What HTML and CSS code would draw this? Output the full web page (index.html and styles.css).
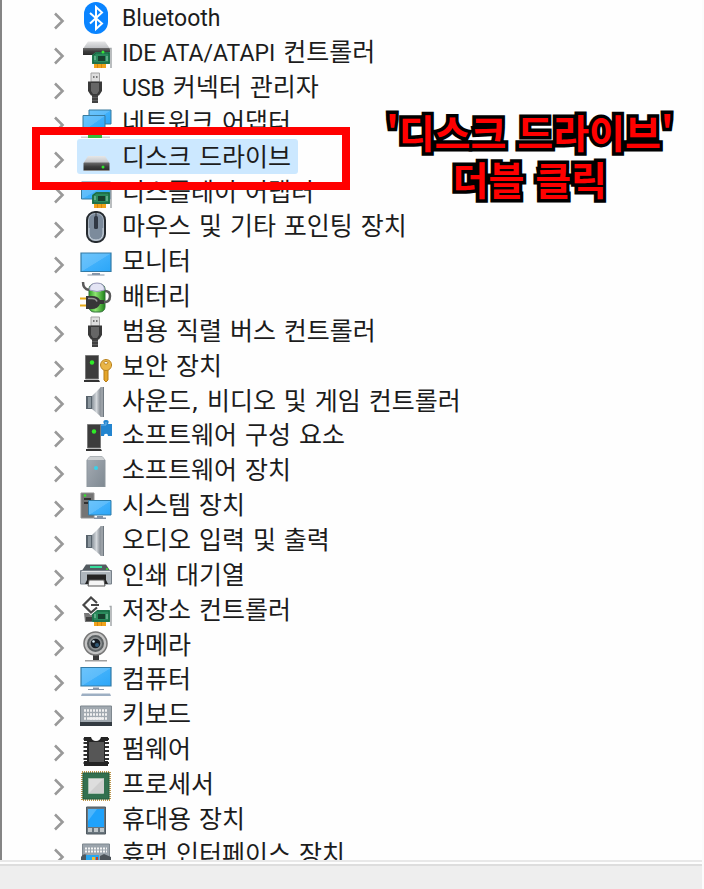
FILE: index.html
```html
<!DOCTYPE html>
<html lang="ko">
<head>
<meta charset="utf-8">
<meta name="viewport" content="width=device-width, initial-scale=1">
<title>장치 관리자</title>
<link rel="stylesheet" href="styles.css">
</head>
<body>
<svg class="sprite" aria-hidden="true">
  <defs>
    <linearGradient id="screen" x1="0" y1="0" x2="1" y2="1"><stop offset="0" stop-color="#6cc4fb"/><stop offset=".5" stop-color="#5cbcfb"/><stop offset=".52" stop-color="#3fb0fb"/><stop offset="1" stop-color="#2ba6f8"/></linearGradient>
    <linearGradient id="silver" x1="0" y1="0" x2="0" y2="1"><stop offset="0" stop-color="#e6e7e8"/><stop offset="1" stop-color="#bfc1c4"/></linearGradient>
    <linearGradient id="dark" x1="0" y1="0" x2="0" y2="1"><stop offset="0" stop-color="#6c6c6c"/><stop offset=".5" stop-color="#3d3d3d"/><stop offset="1" stop-color="#2a2a2a"/></linearGradient>
    <linearGradient id="steel" x1="0" y1="0" x2="1" y2="0"><stop offset="0" stop-color="#8b949c"/><stop offset=".5" stop-color="#d4d8dc"/><stop offset="1" stop-color="#7b828a"/></linearGradient>
    <linearGradient id="slate" x1="0" y1="0" x2="1" y2="1"><stop offset="0" stop-color="#a5acb4"/><stop offset="1" stop-color="#7f8992"/></linearGradient>
    <linearGradient id="cell" x1="0" y1="0" x2="1" y2="0"><stop offset="0" stop-color="#2c9d25"/><stop offset=".4" stop-color="#8fe572"/><stop offset="1" stop-color="#1d8218"/></linearGradient>
    <symbol id="chevron" viewBox="0 0 12 18"><path d="M2 1.500L9.500 9L2 16.500" fill="none" stroke="#999" stroke-width="2.600"/></symbol>
    <symbol id="board" viewBox="0 0 32 32"><path d="M14 26h12v5H14z" fill="#f0a31b"/><path d="M17.500 27v4M21.500 27v4" stroke="#c87a08" stroke-width=".7"/><path d="M12 18l4-3h14v12H12z" fill="#2a8a5c"/><path d="M13 18.500l3.500-2.500H29v10H13z" fill="none" stroke="#155c3c"/><path d="M18 19h7v5h-7z" fill="#173f2d"/><path d="M15 19v4M27 19v5" stroke="#92cdb0"/><path d="M29.500 11.500h1.500V31" fill="none" stroke="#a4a8aa" stroke-width="1.500"/></symbol>
    <symbol id="bluetooth" viewBox="0 0 32 32"><rect x="4" width="24" height="32" rx="12" fill="#0a84ff"/><path d="M10 11l12 10.500-6 5.500V5l6 5.500L10 21.500" fill="none" stroke="#fff" stroke-width="2"/></symbol>
    <symbol id="ide" viewBox="0 0 32 32"><path d="M8 4.500h17l4.500 6.500h-26z" fill="url(#silver)"/><path d="M3 11h27v7H3z" fill="url(#dark)"/><use href="#board"/><circle cx="23" cy="15" r="1.500" fill="#39e637"/></symbol>
    <symbol id="usb" viewBox="0 0 32 32"><path d="M11 1h8.500v9H11z" fill="#dedede" stroke="#a2a2a2"/><path d="M13 4h1.500v2H13zM16 4h1.500v2H16z" fill="#777"/><path d="M8 9.500h14V19l-3 4.500h-8L8 19z" fill="#393939"/><path d="M11 11h8v8l-2 3h-4l-2-3z" fill="#666"/><path d="M12 23h6v8h-6z" fill="#414141"/><path d="M12 25.500h6M12 28.500h6" stroke="#6d6d6d" stroke-width=".7"/></symbol>
    <symbol id="network" viewBox="0 0 32 32"><path d="M9 3h22v14H9z" fill="url(#screen)" stroke="#397b9e"/><path d="M3 8.500h22V24H3z" fill="url(#screen)" stroke="#397b9e"/><path d="M1 29.500h29V31H1z" fill="#cfcfcf"/><path d="M8 28h14v3H8z" fill="#36bb3a"/></symbol>
    <symbol id="disk" viewBox="0 0 32 32"><path d="M8 14h17l4.500 7h-26z" fill="url(#silver)"/><rect x="3.500" y="20.500" width="26" height="8.500" rx="1" fill="url(#dark)"/><path d="M4 28.500h25" stroke="#8b8b8b"/><circle cx="23" cy="25" r="1.500" fill="#30e82d"/></symbol>
    <symbol id="display" viewBox="0 0 32 32"><path d="M1.500 5h29v17h-29z" fill="url(#screen)" stroke="#397b9e"/><use href="#board"/></symbol>
    <symbol id="mouse" viewBox="0 0 32 32"><rect x="7" y="1" width="18" height="30" rx="8" fill="#a5b1be" stroke="#252a2f" stroke-width="2"/><rect x="9" y="3" width="14" height="26" rx="6" fill="#7c8b9c"/><path d="M16 2v5" stroke="#333"/><rect x="14" y="5" width="4" height="13" rx="1.500" fill="#303844"/><path d="M9 17v6q1 6 7 6t7-6v-6" fill="none" stroke="#c6d0db"/></symbol>
    <symbol id="monitor" viewBox="0 0 32 32"><path d="M1 7h30v18.500H1z" fill="url(#screen)" stroke="#347ba5" stroke-width="1.200"/><path d="M12 27h8v1.500h4.500v1h-17v-1H12z" fill="#8796a8"/></symbol>
    <symbol id="battery" viewBox="0 0 32 32"><rect x="9" y="3" width="16" height="28" rx="5" fill="url(#cell)" stroke="#33723a"/><path d="M9.500 9q0-7 7.500-7t7.500 7q-7.500 3-15 0z" fill="#e3e4f4" stroke="#9a98bd"/><path d="M3 1q0 7 6 8M23 21q7 1 7-6 0-5-5-5" fill="none" stroke="#595959" stroke-width="2.500"/><path d="M0 17.500h7M0 24.500h7" stroke="#e7ab18" stroke-width="2"/><path d="M6 15h6q6 0 8 4h4v4h-4q-2 5-8 5H6z" fill="#373737"/><path d="M8 17.500h4q4 0 5 3" fill="none" stroke="#999" stroke-width="1.500"/></symbol>
    <symbol id="tower" viewBox="0 0 32 32"><path d="M5.500 4.500h13V28h-13z" fill="#3c3c3c" stroke="#797979"/><path d="M4 29h15l1 2H4z" fill="#333"/><circle cx="12" cy="11.500" r="2.200" fill="#2fed28"/></symbol>
    <symbol id="security" viewBox="0 0 32 32"><use href="#tower"/><path d="M24 18h4v11l-2 2-2-2z" fill="#e4a52a" stroke="#b77c15"/><path d="M26 8.500a5.500 5.500 0 1 0 .1 0zm0 2a2 1.300 0 1 1-.1 0z" fill="#eab647" stroke="#b9811d" fill-rule="evenodd"/></symbol>
    <symbol id="sound" viewBox="0 0 32 32"><path d="M6 10h7v13H6z" fill="#59646d"/><path d="M8 11h3v11H8z" fill="#8b969e"/><path d="M12 10l7-7 2-2v30l-2-2-7-6z" fill="url(#steel)"/><path d="M20.500 1h3v30h-3z" fill="#9ba1a7"/><path d="M23.500 1v30" stroke="#6f7880"/></symbol>
    <symbol id="component" viewBox="0 0 32 32"><path d="M20 4h4q-2-4 2-4t2 4h4v12h-4q0-3-3-2-1 0-1 2h-4z" fill="#2385cf"/><path d="M21 5h5V2" fill="none" stroke="#74b6e8"/><use href="#tower" x="2"/></symbol>
    <symbol id="software" viewBox="0 0 32 32"><path d="M7 5l3-3.500h12L25 5v27H7z" fill="url(#slate)" stroke="#8d969d"/><path d="M7 5l3-3.500h12L25 5z" fill="#cdd0d2"/><circle cx="16" cy="13" r="2" fill="#38d2eb"/></symbol>
    <symbol id="system" viewBox="0 0 32 32"><path d="M1 3h13v25H1z" fill="#747474" stroke="#929292"/><path d="M4 8h7v2H4zM4 12h7v2H4z" fill="#303030"/><circle cx="5" cy="5.500" r="1.300" fill="#35e42c"/><path d="M8.500 10.500H31V25H8.500z" fill="url(#screen)" stroke="#307ca8"/><path d="M17 26h6v1.500h3V29H14v-1.500h3z" fill="#8493a5"/></symbol>
    <symbol id="printer" viewBox="0 0 32 32"><path d="M6 4.500h20l4 6H2z" fill="#535b60"/><path d="M10 7h12" stroke="#36dd9b" stroke-width="2"/><circle cx="27" cy="9" r="1" fill="#3be52d"/><path d="M.5 10.500h31V24H.5z" fill="#aeb6bd" stroke="#78818a"/><path d="M2 11.500h28" stroke="#e4e7e9"/><path d="M7 14.500h19V20l2 4H5l2-4z" fill="#242424"/><path d="M9 20h15l1 6H8z" fill="#f5f5f5" stroke="#555"/></symbol>
    <symbol id="storage" viewBox="0 0 32 32"><path d="M4 18h10v9H5z" fill="#777"/><path d="M6 22h6v4H6z" fill="#404040"/><use href="#board"/><path d="M17 8l-6-5.500L3.500 10l7.500 7.500 6-5M11 10h8" fill="none" stroke="#fff" stroke-width="4"/><path d="M17 8l-6-5.500L3.500 10l7.500 7.500 6-5M11 10h8" fill="none" stroke="#474747" stroke-width="2.200"/></symbol>
    <symbol id="camera" viewBox="0 0 32 32"><path d="M13 25h6v5h-6z" fill="#393939"/><path d="M5 30h22v1.500H5z" fill="#a0a0a0"/><circle cx="15.500" cy="13.500" r="11.500" fill="#c4c4c4" stroke="#777" stroke-width="1.500"/><circle cx="15.500" cy="13.500" r="7.500" fill="#8e9294" stroke="#5d6264" stroke-width="2"/><circle cx="15.500" cy="13.500" r="4.800" fill="#171d24"/><circle cx="17" cy="15" r="2" fill="#315977"/><circle cx="13.500" cy="11.500" r="1.300" fill="#d9edf7"/></symbol>
    <symbol id="computer" viewBox="0 0 32 32"><path d="M1 3.500h30v18.500H1z" fill="url(#screen)" stroke="#347ba5" stroke-width="1.200"/><path d="M13 23.500h6V25h5v1H8v-1h5z" fill="#8796a8"/><path d="M2 29.500h28l1 2.500H1z" fill="#9dafc3"/></symbol>
    <symbol id="keyboard" viewBox="0 0 32 32"><path d="M.5 7h31v19H.5z" fill="#a1a9b0" stroke="#7f888f"/><path d="M0 23h32v4H0z" fill="#343b42"/><path d="M4 11.500h24M4 15.500h24M4 19.500h24" stroke="#f1f1f1" stroke-width="2.500" stroke-dasharray="2 1"/><path d="M9 19.500h14" stroke="#f1f1f1" stroke-width="2.500"/></symbol>
    <symbol id="firmware" viewBox="0 0 32 32"><path d="M5.500 4v28M27 4v28" stroke="#303030" stroke-width="4" stroke-dasharray="2 2"/><path d="M4 3h7q1 4 5 4t5-4h7v4h-3v20h3v5H4v-5h3V7H4z" fill="#242424"/><path d="M9 8h15v20H9z" fill="#565656"/></symbol>
    <symbol id="processor" viewBox="0 0 32 32"><rect x="2" y="3" width="28" height="28" fill="none" stroke="#bc9549" stroke-width="2" stroke-dasharray="1 1"/><path d="M3 4h26v26H3z" fill="#32704f" stroke="#255d40"/><path d="M8.500 9.500h15v15h-15z" fill="#dedede" stroke="#a8bfb0"/><path d="M9 24L24 9v15z" fill="#cfcfcf"/></symbol>
    <symbol id="portable" viewBox="0 0 32 32"><path d="M6.500 3h19v27h-19z" fill="#68747c" stroke="#505a61"/><path d="M8 5h16v18H8z" fill="#1fa2fb"/><path d="M8 5h9L8 17z" fill="#4db5fb"/><path d="M8 24h4v4H8zM14 24h4v4h-4zM20 24h4v4h-4z" fill="#bfc6c9"/></symbol>
    <symbol id="hid" viewBox="0 0 32 32"><path d="M2.500 5h27v18h-27z" fill="#9ba4ac" stroke="#7f888f"/><path d="M5 9.500h22M5 12.500h22" stroke="#f4f4f4" stroke-width="2" stroke-dasharray="2 1"/><path d="M1 18q2-4 6-2v7H1z" fill="#4e5960"/><path d="M6 16h13v7H6z" fill="#28a6ef"/><path d="M12 18h3v5h-3z" fill="#efbd33"/><path d="M16 18h2v5h-2z" fill="#c2442e"/><path d="M20 17l4-2 7 3v5H20z" fill="#4d545a"/></symbol>
  </defs>
</svg>
<main class="window">
  <section class="tree">
    <ul class="devices">
      <li class="row"><button class="toggle" aria-label="펼치기"><svg><use href="#chevron"/></svg></button><span class="device"><svg class="icon"><use href="#bluetooth"/></svg><span class="label"><span class="latin">Bluetooth</span></span></span></li>
      <li class="row"><button class="toggle" aria-label="펼치기"><svg><use href="#chevron"/></svg></button><span class="device"><svg class="icon"><use href="#ide"/></svg><span class="label"><span class="latin">IDE ATA/ATAPI</span> 컨트롤러</span></span></li>
      <li class="row"><button class="toggle" aria-label="펼치기"><svg><use href="#chevron"/></svg></button><span class="device"><svg class="icon"><use href="#usb"/></svg><span class="label"><span class="latin">USB</span> 커넥터 관리자</span></span></li>
      <li class="row"><button class="toggle" aria-label="펼치기"><svg><use href="#chevron"/></svg></button><span class="device"><svg class="icon"><use href="#network"/></svg><span class="label">네트워크 어댑터</span></span></li>
      <li class="row marked"><button class="toggle" aria-label="펼치기"><svg><use href="#chevron"/></svg></button><span class="device selected"><svg class="icon"><use href="#disk"/></svg><span class="label">디스크 드라이브</span></span></li>
      <li class="row"><button class="toggle" aria-label="펼치기"><svg><use href="#chevron"/></svg></button><span class="device"><svg class="icon"><use href="#display"/></svg><span class="label">디스플레이 어댑터</span></span></li>
      <li class="row"><button class="toggle" aria-label="펼치기"><svg><use href="#chevron"/></svg></button><span class="device"><svg class="icon"><use href="#mouse"/></svg><span class="label">마우스 및 기타 포인팅 장치</span></span></li>
      <li class="row"><button class="toggle" aria-label="펼치기"><svg><use href="#chevron"/></svg></button><span class="device"><svg class="icon"><use href="#monitor"/></svg><span class="label">모니터</span></span></li>
      <li class="row"><button class="toggle" aria-label="펼치기"><svg><use href="#chevron"/></svg></button><span class="device"><svg class="icon"><use href="#battery"/></svg><span class="label">배터리</span></span></li>
      <li class="row"><button class="toggle" aria-label="펼치기"><svg><use href="#chevron"/></svg></button><span class="device"><svg class="icon"><use href="#usb"/></svg><span class="label">범용 직렬 버스 컨트롤러</span></span></li>
      <li class="row"><button class="toggle" aria-label="펼치기"><svg><use href="#chevron"/></svg></button><span class="device"><svg class="icon"><use href="#security"/></svg><span class="label">보안 장치</span></span></li>
      <li class="row"><button class="toggle" aria-label="펼치기"><svg><use href="#chevron"/></svg></button><span class="device"><svg class="icon"><use href="#sound"/></svg><span class="label">사운드, 비디오 및 게임 컨트롤러</span></span></li>
      <li class="row"><button class="toggle" aria-label="펼치기"><svg><use href="#chevron"/></svg></button><span class="device"><svg class="icon"><use href="#component"/></svg><span class="label">소프트웨어 구성 요소</span></span></li>
      <li class="row"><button class="toggle" aria-label="펼치기"><svg><use href="#chevron"/></svg></button><span class="device"><svg class="icon"><use href="#software"/></svg><span class="label">소프트웨어 장치</span></span></li>
      <li class="row"><button class="toggle" aria-label="펼치기"><svg><use href="#chevron"/></svg></button><span class="device"><svg class="icon"><use href="#system"/></svg><span class="label">시스템 장치</span></span></li>
      <li class="row"><button class="toggle" aria-label="펼치기"><svg><use href="#chevron"/></svg></button><span class="device"><svg class="icon"><use href="#sound"/></svg><span class="label">오디오 입력 및 출력</span></span></li>
      <li class="row"><button class="toggle" aria-label="펼치기"><svg><use href="#chevron"/></svg></button><span class="device"><svg class="icon"><use href="#printer"/></svg><span class="label">인쇄 대기열</span></span></li>
      <li class="row"><button class="toggle" aria-label="펼치기"><svg><use href="#chevron"/></svg></button><span class="device"><svg class="icon"><use href="#storage"/></svg><span class="label">저장소 컨트롤러</span></span></li>
      <li class="row"><button class="toggle" aria-label="펼치기"><svg><use href="#chevron"/></svg></button><span class="device"><svg class="icon"><use href="#camera"/></svg><span class="label">카메라</span></span></li>
      <li class="row"><button class="toggle" aria-label="펼치기"><svg><use href="#chevron"/></svg></button><span class="device"><svg class="icon"><use href="#computer"/></svg><span class="label">컴퓨터</span></span></li>
      <li class="row"><button class="toggle" aria-label="펼치기"><svg><use href="#chevron"/></svg></button><span class="device"><svg class="icon"><use href="#keyboard"/></svg><span class="label">키보드</span></span></li>
      <li class="row"><button class="toggle" aria-label="펼치기"><svg><use href="#chevron"/></svg></button><span class="device"><svg class="icon"><use href="#firmware"/></svg><span class="label">펌웨어</span></span></li>
      <li class="row"><button class="toggle" aria-label="펼치기"><svg><use href="#chevron"/></svg></button><span class="device"><svg class="icon"><use href="#processor"/></svg><span class="label">프로세서</span></span></li>
      <li class="row"><button class="toggle" aria-label="펼치기"><svg><use href="#chevron"/></svg></button><span class="device"><svg class="icon"><use href="#portable"/></svg><span class="label">휴대용 장치</span></span></li>
      <li class="row"><button class="toggle" aria-label="펼치기"><svg><use href="#chevron"/></svg></button><span class="device"><svg class="icon"><use href="#hid"/></svg><span class="label">휴먼 인터페이스 장치</span></span></li>
    </ul>
    <p class="callout">'디스크 드라이브'<br>더블 클릭</p>
  </section>
  <footer class="statusbar"></footer>
</main>
</body>
</html>
```
FILE: styles.css
```css
*,
*::after {
  box-sizing: border-box;
}

body {
  margin: 0;
  background: #fbfbfb;
}

.sprite {
  position: absolute;
  width: 0;
  height: 0;
}

.window {
  display: flex;
  flex-direction: column;
  height: 100vh;
  margin-right: 2px;
}

.tree {
  position: relative;
  flex: 1;
  min-height: 0;
  overflow: hidden;
  background: #fefefe;
  border-left: 2px solid #858585;
}

/* The last row runs under the status bar. */
.devices {
  display: grid;
  grid-auto-rows: 1fr;
  height: calc(100% + 11px);
  margin: 0;
  padding: 0;
  list-style: none;
}

.row {
  position: relative;
  display: flex;
  gap: 10px;
  min-height: 0;
  padding-left: 51px;
}

.toggle {
  display: flex;
  align-items: center;
  padding: 7px 0 0;
  border: 0;
  background: none;
}

.toggle svg {
  width: 12px;
  height: 18px;
}

.device {
  display: flex;
  align-items: center;
  gap: 10px;
  padding: 2px 7px 0 5px;
  border-radius: 3px;
}

.selected {
  padding-left: 3px;
  margin-left: 2px;
  background: #cce8ff;
}

.icon {
  width: 32px;
  height: 32px;
}

/* DejaVu Sans supplies the wide word space between the Hangul words. */
.label {
  color: #1c1c1c;
  font-family: "DejaVu Sans", "Noto Sans CJK KR", sans-serif;
  font-size: 25px;
  line-height: 32px;
  white-space: nowrap;
}

.latin {
  font-family: Roboto, sans-serif;
  font-size: 23px;
}

.marked::after {
  content: "";
  position: absolute;
  z-index: 1;
  top: -12px;
  bottom: -16px;
  left: 30px;
  width: 318px;
  border: 8px solid #f00;
}

.callout {
  position: absolute;
  z-index: 2;
  top: 108px;
  left: 384px;
  margin: 0;
  color: #f00;
  font: 700 39px/47px "Noto Sans CJK KR", sans-serif;
  text-align: center;
  white-space: nowrap;
  -webkit-text-stroke: 7px #000;
  paint-order: stroke fill;
  stroke-linejoin: round;
}

.statusbar {
  height: 29px;
  background: #eee;
  border-top: 2px solid #e8e8e8;
  box-shadow: inset 0 2px #fdfdfd, inset 0 4px #ddd;
}
```
